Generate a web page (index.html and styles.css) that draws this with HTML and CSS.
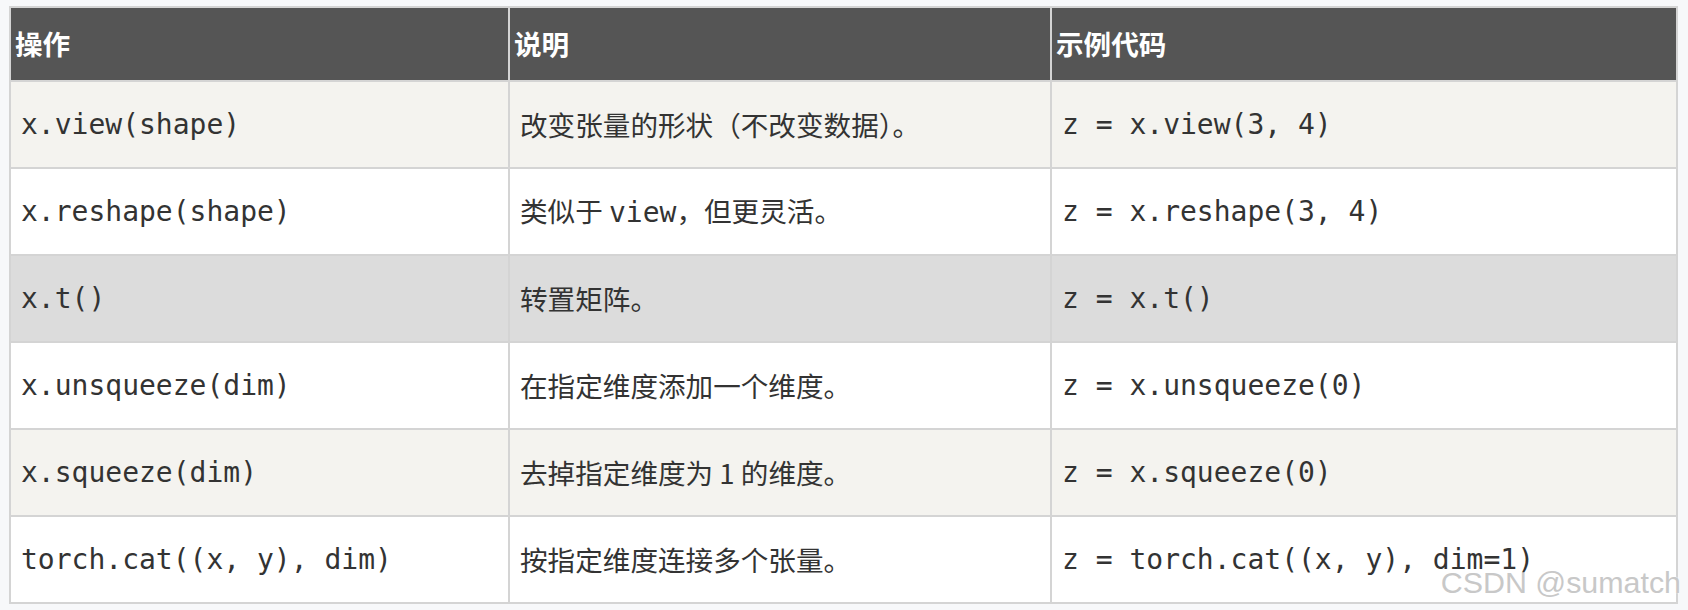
FILE: index.html
```html
<!DOCTYPE html>
<html lang="zh-CN">
<head>
<meta charset="utf-8">
<title>张量操作</title>
<link rel="stylesheet" href="styles.css">
</head>
<body>
<div class="wrap">
  <table class="ops">
    <colgroup>
      <col class="c1"><col class="c2"><col class="c3">
    </colgroup>
    <thead>
      <tr><th>操作</th><th>说明</th><th>示例代码</th></tr>
    </thead>
    <tbody>
      <tr class="alt"><td class="code">x.view(shape)</td><td>改变张量的形状（不改变数据）。</td><td class="code">z = x.view(3, 4)</td></tr>
      <tr><td class="code">x.reshape(shape)</td><td>类似于 <code>view</code>，但更灵活。</td><td class="code">z = x.reshape(3, 4)</td></tr>
      <tr class="hover"><td class="code">x.t()</td><td>转置矩阵。</td><td class="code">z = x.t()</td></tr>
      <tr><td class="code">x.unsqueeze(dim)</td><td>在指定维度添加一个维度。</td><td class="code">z = x.unsqueeze(0)</td></tr>
      <tr class="alt"><td class="code">x.squeeze(dim)</td><td>去掉指定维度为 1 的维度。</td><td class="code">z = x.squeeze(0)</td></tr>
      <tr><td class="code">torch.cat((x, y), dim)</td><td>按指定维度连接多个张量。</td><td class="code">z = torch.cat((x, y), dim=1)</td></tr>
    </tbody>
  </table>
  <div class="watermark">CSDN @sumatch</div>
</div>
</body>
</html>
```
FILE: styles.css
```css
html, body {
  margin: 0;
  padding: 0;
  background: #f7f8fa;
}
body {
  padding: 6px 0 0 9px;
}
.wrap {
  position: relative;
  width: 1669px;
}
.ops {
  table-layout: fixed;
  width: 1669px;
  border-collapse: separate;
  border-spacing: 2px;
  background: #d4d4d4;
  font-family: "Noto Sans CJK SC", "DejaVu Sans", sans-serif;
  font-size: 27.6px;
  color: #333333;
}
.c1 { width: 497px; }
.c2 { width: 540px; }
.c3 { width: 624px; }
.ops thead tr {
  height: 72px;
}
.ops th {
  background: #555555;
  color: #ffffff;
  font-weight: bold;
  text-align: left;
  padding: 0 4px;
  vertical-align: middle;
  line-height: 1.2;
}
.ops tbody tr {
  height: 85px;
  background: #ffffff;
}
.ops tbody tr.alt { background: #f4f3ef; }
.ops tbody tr.hover { background: #dcdcdc; }
.ops td {
  padding: 0 10px;
  vertical-align: middle;
  line-height: 1.2;
  white-space: nowrap;
}
.ops td.code, .ops code {
  font-family: "DejaVu Sans Mono", "Liberation Mono", monospace;
  font-size: 28px;
}
.watermark {
  position: absolute;
  right: -3px;
  bottom: 7px;
  font-family: "Liberation Sans", Arial, sans-serif;
  font-size: 30.4px;
  line-height: 1;
  color: #c8c8c8;
  text-shadow: 0 0 1px #ffffff, 0 0 1px #ffffff;
}
```
